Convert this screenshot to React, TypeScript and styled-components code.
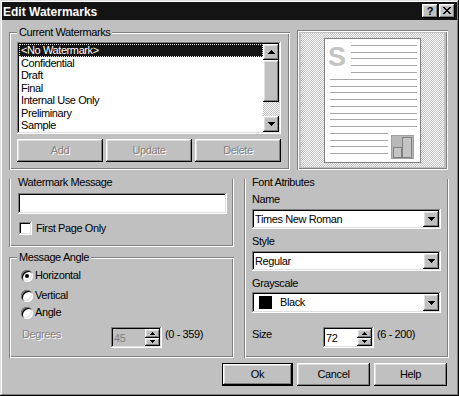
import React from "react";
import styled, { createGlobalStyle, css } from "styled-components";

const Global = createGlobalStyle`
  html, body { margin: 0; padding: 0; background: #c0c0c0; }
  body {
    font-family: "Liberation Sans", Arial, sans-serif;
    font-size: 11px;
    letter-spacing: -0.4px;
    color: #000;
  }
  * { box-sizing: border-box; }
`;

const raised = css`
  box-shadow: inset -1px -1px #000, inset 1px 1px #fff, inset -2px -2px #808080,
    inset 2px 2px #dfdfdf;
`;

const sunken = css`
  box-shadow: inset -1px -1px #fff, inset 1px 1px #808080, inset -2px -2px #dfdfdf,
    inset 2px 2px #000;
`;

const dither = css`
  background: repeating-conic-gradient(#c0c0c0 0% 25%, #fff 0% 50%) 0 0 / 2px 2px;
`;

const Window = styled.div`
  width: 459px;
  height: 396px;
  padding: 2px;
  background: #c0c0c0;
  box-shadow: inset -1px -1px #000, inset 1px 1px #dfdfdf, inset -2px -2px #808080,
    inset 2px 2px #fff;
  display: flex;
  flex-direction: column;
`;

const TitleBar = styled.div`
  height: 18px;
  background: #141414;
  color: #fff;
  display: flex;
  align-items: center;
  padding: 0 2px 0 1px;
`;

const TitleText = styled.span`
  flex: 1;
  font-weight: bold;
  font-size: 12px;
  letter-spacing: 0;
  line-height: 18px;
  padding-top: 1px;
`;

const CaptionButton = styled.div<{ $gap?: number }>`
  width: 16px;
  height: 14px;
  margin-left: ${(p) => p.$gap ?? 0}px;
  background: #c0c0c0;
  color: #000;
  ${raised};
  display: flex;
  align-items: center;
  justify-content: center;
  font-weight: bold;
  font-size: 11px;
  letter-spacing: 0;
  line-height: 12px;
  padding-bottom: 1px;
`;

const Body = styled.div`
  flex: 1;
  display: flex;
  flex-direction: column;
  padding: 10px 9px 0 7px;
`;

const TopRow = styled.div`
  display: flex;
  align-items: flex-start;
  gap: 7px;
`;

const MidRow = styled.div`
  display: flex;
  align-items: flex-start;
  gap: 10px;
  margin-top: 9px;
`;

const Column = styled.div`
  display: flex;
  flex-direction: column;
`;

const GroupBox = styled.div<{ $w: number; $h: number; $mt?: number; $pad: string; $open?: boolean }>`
  position: relative;
  width: ${(p) => p.$w}px;
  height: ${(p) => p.$h}px;
  margin-top: ${(p) => p.$mt ?? 0}px;
  padding: ${(p) => p.$pad};
  display: flex;
  flex-direction: column;
  box-shadow: ${(p) =>
    p.$open
      ? "inset 1px 0 #808080, inset -1px -1px #fff, inset 2px 0 #fff, inset -2px -2px #808080"
      : "inset 1px 1px #808080, inset -1px -1px #fff, inset 2px 2px #fff, inset -2px -2px #808080"};
`;

const GroupLabel = styled.span`
  position: absolute;
  top: -6px;
  left: 8px;
  padding: 0 2px;
  background: #c0c0c0;
  line-height: 13px;
`;

const FieldLabel = styled.div<{ $mt?: number; $disabled?: boolean }>`
  line-height: 13px;
  margin-top: ${(p) => p.$mt ?? 0}px;
  white-space: nowrap;
  ${(p) =>
    p.$disabled &&
    css`
      color: #808080;
      text-shadow: 1px 1px #fff;
    `}
`;

const ListBox = styled.div`
  width: 264px;
  height: 92px;
  padding: 2px;
  background: #fff;
  ${sunken};
  display: flex;
`;

const ListItems = styled.div`
  flex: 1;
  overflow: hidden;
`;

const ListItem = styled.div<{ $selected?: boolean }>`
  height: 12.5px;
  line-height: 12.5px;
  padding-left: 2px;
  white-space: nowrap;
  ${(p) =>
    p.$selected &&
    css`
      background: #141414;
      color: #fff;
      outline: 1px dotted #e0e0e0;
      outline-offset: -1px;
    `}
`;

const ScrollBar = styled.div`
  width: 16px;
  display: flex;
  flex-direction: column;
`;

const ScrollButton = styled.div`
  width: 16px;
  height: 16px;
  background: #c0c0c0;
  ${raised};
  display: flex;
  align-items: center;
  justify-content: center;
`;

const ScrollThumb = styled.div<{ $h: number }>`
  height: ${(p) => p.$h}px;
  background: #c0c0c0;
  ${raised};
`;

const ScrollTrack = styled.div`
  flex: 1;
  ${dither};
`;

const ButtonRow = styled.div<{ $gap: number; $mt: number; $end?: boolean }>`
  display: flex;
  gap: ${(p) => p.$gap}px;
  margin-top: ${(p) => p.$mt}px;
  justify-content: ${(p) => (p.$end ? "flex-end" : "flex-start")};
  margin-right: ${(p) => (p.$end ? 1 : 0)}px;
`;

const PushButton = styled.div<{ $w: number; $disabled?: boolean; $default?: boolean }>`
  width: ${(p) => p.$w}px;
  height: 23px;
  background: #c0c0c0;
  display: flex;
  align-items: center;
  justify-content: center;
  line-height: 13px;
  ${(p) =>
    p.$default
      ? css`
          box-shadow: inset -1px -1px #000, inset 1px 1px #000, inset -2px -2px #000,
            inset 2px 2px #fff, inset -3px -3px #808080, inset 3px 3px #dfdfdf;
        `
      : raised};
  ${(p) =>
    p.$disabled &&
    css`
      color: #808080;
      text-shadow: 1px 1px #fff;
    `}
`;

const Preview = styled.div`
  width: 151px;
  height: 140px;
  padding: 3px 4px;
  box-shadow: inset 1px 1px #808080, inset -1px -1px #fff, inset 2px 2px #fff,
    inset -2px -2px #808080;
  display: flex;
`;

const PreviewArea = styled.div`
  flex: 1;
  ${dither};
  display: flex;
  align-items: center;
  justify-content: center;
`;

const TextInput = styled.div`
  width: 209px;
  height: 21px;
  margin-top: 4px;
  background: #fff;
  ${sunken};
`;

const CheckRow = styled.div`
  display: flex;
  align-items: center;
  gap: 4px;
  margin-top: 8px;
  margin-left: 1px;
  height: 13px;
  line-height: 13px;
`;

const CheckBox = styled.div`
  width: 13px;
  height: 13px;
  background: #fff;
  ${sunken};
`;

const RadioRow = styled.div<{ $mt: number }>`
  display: flex;
  align-items: center;
  gap: 2px;
  height: 13px;
  line-height: 13px;
  margin-top: ${(p) => p.$mt}px;
`;

const Radio = styled.div<{ $checked?: boolean }>`
  width: 12px;
  height: 12px;
  border-radius: 50%;
  background: #fff;
  box-shadow: inset 1px 1px #808080, inset -1px -1px #fff, inset 2px 2px #000,
    inset -2px -2px #dfdfdf;
  display: flex;
  align-items: center;
  justify-content: center;
  &::after {
    content: "";
    width: 4px;
    height: 4px;
    border-radius: 50%;
    background: ${(p) => (p.$checked ? "#000" : "transparent")};
  }
`;

const SpinRow = styled.div<{ $mt: number; $indent: number }>`
  display: flex;
  align-items: center;
  height: 21px;
  margin-top: ${(p) => p.$mt}px;
  padding-left: ${(p) => p.$indent}px;
`;

const SpinLabel = styled.div<{ $w: number; $disabled?: boolean }>`
  width: ${(p) => p.$w}px;
  line-height: 13px;
  margin-top: -7px;
  ${(p) =>
    p.$disabled &&
    css`
      color: #808080;
      text-shadow: 1px 1px #fff;
    `}
`;

const RangeText = styled.div`
  margin-left: 3px;
  line-height: 13px;
  margin-top: -7px;
`;

const SpinBox = styled.div<{ $disabled?: boolean }>`
  width: 51px;
  height: 21px;
  padding: 2px;
  background: ${(p) => (p.$disabled ? "#c0c0c0" : "#fff")};
  ${sunken};
  display: flex;
`;

const SpinText = styled.div<{ $disabled?: boolean }>`
  flex: 1;
  padding-left: 1px;
  display: flex;
  align-items: center;
  color: ${(p) => (p.$disabled ? "#808080" : "#000")};
`;

const SpinButtons = styled.div`
  width: 15px;
  display: flex;
  flex-direction: column;
`;

const SpinButton = styled.div`
  flex: 1;
  background: #c0c0c0;
  ${raised};
  display: flex;
  align-items: center;
  justify-content: center;
`;

const Combo = styled.div<{ $h: number; $mt: number }>`
  width: 189px;
  height: ${(p) => p.$h}px;
  margin-top: ${(p) => p.$mt}px;
  padding: 2px;
  background: #fff;
  ${sunken};
  display: flex;
`;

const ComboText = styled.div`
  flex: 1;
  display: flex;
  align-items: center;
  padding-left: 1px;
  line-height: 13px;
  white-space: nowrap;
`;

const ComboButton = styled.div`
  width: 16px;
  background: #c0c0c0;
  ${raised};
  display: flex;
  align-items: center;
  justify-content: center;
`;

const Swatch = styled.div`
  width: 13px;
  height: 13px;
  background: #000;
  margin: 0 8px 0 4px;
`;

const ArrowDown = () => (
  <svg width="7" height="4" viewBox="0 0 7 4" shapeRendering="crispEdges">
    <path d="M0 0h7v1H0zM1 1h5v1H1zM2 2h3v1H2zM3 3h1v1H3z" fill="#000" />
  </svg>
);

const ArrowUp = () => (
  <svg width="7" height="4" viewBox="0 0 7 4" shapeRendering="crispEdges">
    <path d="M3 0h1v1H3zM2 1h3v1H2zM1 2h5v1H1zM0 3h7v1H0z" fill="#000" />
  </svg>
);

const SmallArrow = ({ up }: { up?: boolean }) => (
  <svg width="5" height="3" viewBox="0 0 5 3" shapeRendering="crispEdges">
    <path
      d={up ? "M2 0h1v1H2zM1 1h3v1H1zM0 2h5v1H0z" : "M0 0h5v1H0zM1 1h3v1H1zM2 2h1v1H2z"}
      fill="#000"
    />
  </svg>
);

const CloseGlyph = () => (
  <svg width="8" height="7" viewBox="0 0 8 7" shapeRendering="crispEdges">
    <path
      d="M0 0h2v1H0zM6 0h2v1H6zM1 1h2v1H1zM5 1h2v1H5zM2 2h4v1H2zM3 3h2v1H3zM2 4h4v1H2zM1 5h2v1H1zM5 5h2v1H5zM0 6h2v1H0zM6 6h2v1H6z"
      fill="#000"
    />
  </svg>
);

const PaperDrawing = () => {
  const topShort = [7, 14, 20, 27, 34];
  const long = [41, 48, 54, 61, 68, 75, 81, 88];
  const bottomShort = [95, 102, 108, 115];
  return (
    <svg width="97" height="125" viewBox="0 0 97 125" shapeRendering="crispEdges">
      <rect x="0.5" y="0.5" width="96" height="124" fill="#fff" stroke="#808080" />
      <text
        x="4"
        y="28"
        fontFamily="Liberation Sans, Arial, sans-serif"
        fontWeight="bold"
        fontSize="27"
        fill="#c4c4c4"
      >
        S
      </text>
      {topShort.map((y) => (
        <line key={"a" + y} x1="27" x2="93" y1={y + 0.5} y2={y + 0.5} stroke="#a8a8a8" />
      ))}
      {long.map((y) => (
        <line key={"b" + y} x1="6" x2="93" y1={y + 0.5} y2={y + 0.5} stroke="#a8a8a8" />
      ))}
      {bottomShort.map((y) => (
        <line key={"c" + y} x1="6" x2="64" y1={y + 0.5} y2={y + 0.5} stroke="#a8a8a8" />
      ))}
      <rect x="67.5" y="97.5" width="22" height="23" fill="#b8b8b8" stroke="#a0a0a0" />
      <rect x="69.5" y="109.5" width="8" height="10" fill="#c4c4c4" stroke="#808080" />
      <rect x="78.5" y="99.5" width="9" height="20" fill="#c4c4c4" stroke="#808080" />
    </svg>
  );
};

const items = [
  "<No Watermark>",
  "Confidential",
  "Draft",
  "Final",
  "Internal Use Only",
  "Preliminary",
  "Sample",
];

export default function App() {
  return (
    <>
      <Global />
      <Window>
        <TitleBar>
          <TitleText>Edit Watermarks</TitleText>
          <CaptionButton>?</CaptionButton>
          <CaptionButton $gap={1}>
            <CloseGlyph />
          </CaptionButton>
        </TitleBar>
        <Body>
          <TopRow>
            <GroupBox $w={281} $h={138} $mt={2} $pad="10px 8px">
              <GroupLabel>Current Watermarks</GroupLabel>
              <ListBox>
                <ListItems>
                  {items.map((t, i) => (
                    <ListItem key={t} $selected={i === 0}>
                      {t}
                    </ListItem>
                  ))}
                </ListItems>
                <ScrollBar>
                  <ScrollButton>
                    <ArrowUp />
                  </ScrollButton>
                  <ScrollThumb $h={42} />
                  <ScrollTrack />
                  <ScrollButton>
                    <ArrowDown />
                  </ScrollButton>
                </ScrollBar>
              </ListBox>
              <ButtonRow $gap={3} $mt={5}>
                <PushButton $w={86} $disabled>
                  Add
                </PushButton>
                <PushButton $w={86} $disabled>
                  Update
                </PushButton>
                <PushButton $w={86} $disabled>
                  Delete
                </PushButton>
              </ButtonRow>
            </GroupBox>
            <Preview>
              <PreviewArea>
                <PaperDrawing />
              </PreviewArea>
            </Preview>
          </TopRow>

          <MidRow>
            <Column>
              <GroupBox $w={225} $h={68} $pad="0 8px 0 9px" $open>
                <FieldLabel $mt={-3}>Watermark Message</FieldLabel>
                <TextInput />
                <CheckRow>
                  <CheckBox />
                  <span>First Page Only</span>
                </CheckRow>
              </GroupBox>
              <GroupBox $w={225} $h={101} $mt={10} $pad="12px 8px 0 12px">
                <GroupLabel>Message Angle</GroupLabel>
                <RadioRow $mt={0}>
                  <Radio $checked />
                  <span>Horizontal</span>
                </RadioRow>
                <RadioRow $mt={7}>
                  <Radio />
                  <span>Vertical</span>
                </RadioRow>
                <RadioRow $mt={4}>
                  <Radio />
                  <span>Angle</span>
                </RadioRow>
                <SpinRow $mt={8} $indent={1}>
                  <SpinLabel $w={89} $disabled>
                    Degrees
                  </SpinLabel>
                  <SpinBox $disabled>
                    <SpinText $disabled>45</SpinText>
                    <SpinButtons>
                      <SpinButton>
                        <SmallArrow up />
                      </SpinButton>
                      <SpinButton>
                        <SmallArrow />
                      </SpinButton>
                    </SpinButtons>
                  </SpinBox>
                  <RangeText>(0 - 359)</RangeText>
                </SpinRow>
              </GroupBox>
            </Column>

            <GroupBox $w={205} $h={179} $pad="0 8px 0 8px" $open>
              <FieldLabel $mt={-3}>Font Atributes</FieldLabel>
              <FieldLabel $mt={4}>Name</FieldLabel>
              <Combo $h={20} $mt={3}>
                <ComboText>Times New Roman</ComboText>
                <ComboButton>
                  <ArrowDown />
                </ComboButton>
              </Combo>
              <FieldLabel $mt={6}>Style</FieldLabel>
              <Combo $h={20} $mt={3}>
                <ComboText>Regular</ComboText>
                <ComboButton>
                  <ArrowDown />
                </ComboButton>
              </Combo>
              <FieldLabel $mt={6}>Grayscale</FieldLabel>
              <Combo $h={21} $mt={2}>
                <ComboText>
                  <Swatch />
                  Black
                </ComboText>
                <ComboButton>
                  <ArrowDown />
                </ComboButton>
              </Combo>
              <SpinRow $mt={14} $indent={0}>
                <SpinLabel $w={71}>Size</SpinLabel>
                <SpinBox>
                  <SpinText>72</SpinText>
                  <SpinButtons>
                    <SpinButton>
                      <SmallArrow up />
                    </SpinButton>
                    <SpinButton>
                      <SmallArrow />
                    </SpinButton>
                  </SpinButtons>
                </SpinBox>
                <RangeText>(6 - 200)</RangeText>
              </SpinRow>
            </GroupBox>
          </MidRow>

          <ButtonRow $gap={4} $mt={5} $end>
            <PushButton $w={71} $default>
              Ok
            </PushButton>
            <PushButton $w={73}>Cancel</PushButton>
            <PushButton $w={73}>Help</PushButton>
          </ButtonRow>
        </Body>
      </Window>
    </>
  );
}
